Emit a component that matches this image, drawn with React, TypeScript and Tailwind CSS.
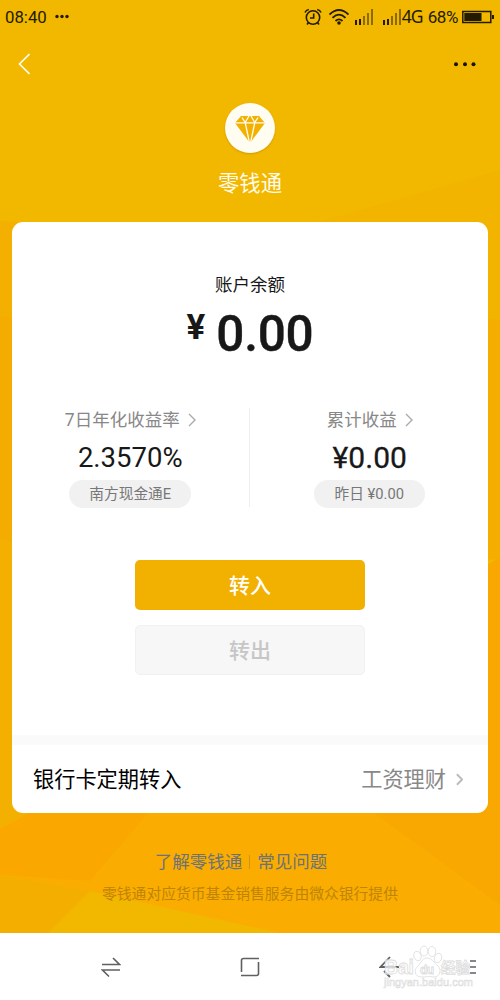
import { ReactNode } from 'react';
import clsx from 'clsx';

const Backdrop = () => (
	<svg className="absolute inset-0 h-full w-full" viewBox="0 0 500 934" preserveAspectRatio="none">
		<path d="M0 0H500V934H0Z" fill="#f2b800" />
		<path d="M500 170L340 216L250 240V560H500Z" fill="#f3b400" />
		<path d="M0 221L250 240V600L0 540Z" fill="#f4b000" />
		<path d="M500 320L250 300V560H500Z" fill="#f5ae00" />
		<path d="M0 316L200 350V590L0 540Z" fill="#f5ac00" />
		<path d="M0 540L160 580V735L0 830Z" fill="#f4b000" />
		<path d="M500 558L250 700V934H500Z" fill="#f8a800" />
		<path d="M0 830L160 740H360L500 850V934H190L0 876Z" fill="#faad00" />
		<path d="M0 830L150 745V812L90 882L0 876Z" fill="#faa700" />
		<path d="M373 813L500 906V700H250Z" fill="#f8a800" />
		<path d="M0 876L90 892L280 934H0Z" fill="#f2b800" />
		<path d="M0 876L90 892L48 934H0Z" fill="#f4ae00" />
	</svg>
);

const Signal = () => (
	<svg className="h-[18px] w-[19px]" viewBox="0 0 19 18" fill="#231b00">
		<path d="M0 12h2v5H0zM4 11h2v6H4z" />
		<path d="M8 8h2v9H8zM12 5h2v12h-2zM16 1h2v16h-2z" opacity=".5" />
	</svg>
);

const StatusBar = () => (
	<div className="flex h-[34px] items-center pl-[5px] text-[#231b00]">
		<span className="w-[43px] pt-px text-[16.8px]">08:40</span>
		<svg className="ml-[6px] h-2 w-4" viewBox="0 0 16 8" fill="currentColor">
			<circle cx="3" cy="3.5" r="1.7" />
			<circle cx="8" cy="3.5" r="1.7" />
			<circle cx="13" cy="3.5" r="1.7" />
		</svg>
		<div className="ml-auto flex items-center pr-1.5">
			<svg
				className="h-[18px] w-[18px]"
				viewBox="0 0 18 18"
				fill="none"
				stroke="currentColor"
				strokeWidth="1.6"
			>
				<circle cx="9" cy="9.5" r="6.7" />
				<path d="M9.7 5.5V10H6M1 4.5Q2 2 4.8 1.5M17 4.5Q16 2 13.2 1.5M4.5 14.5l-1.5 2M13.5 14.5l1.5 2" />
			</svg>
			<svg
				className="ml-[7px] h-[18px] w-5"
				viewBox="0 0 20 18"
				fill="none"
				stroke="currentColor"
				strokeWidth="1.8"
			>
				<path d="M.5 6.5Q10-2.5 19.5 6.5M3.5 9.8Q10 3.5 16.5 9.8M6.5 13Q10 9.7 13.5 13" />
				<circle cx="10" cy="15" r="1.8" fill="currentColor" stroke="none" />
			</svg>
			<div className="ml-1.5 flex gap-[9px]">
				<Signal />
				<Signal />
			</div>
			<span className="w-[21px] pb-px font-['Noto_Sans',sans-serif] text-[17.5px] tracking-[-0.8px]">4G</span>
			<span className="ml-[5px] pt-0.5 text-[17px] tracking-[-0.4px]">68%</span>
			<svg className="ml-1 h-[14px] w-8 shrink-0" viewBox="0 0 32 14" fill="none">
				<path d="M.8 1.5h28v11H.8z" stroke="currentColor" strokeWidth="1.5" />
				<path d="M2.3 3h17.2v8H2.3zM30 5h2v4h-2z" fill="currentColor" />
			</svg>
		</div>
	</div>
);

const Chevron = ({ className }: { className?: string }) => (
	<svg className={className} viewBox="0 0 8 14" fill="none" stroke="currentColor">
		<path d="M1 1l6 6-6 6" />
	</svg>
);

interface StatProps {
	label: string;
	value: string;
	valueClass: string;
	note: ReactNode;
	noteClass: string;
}

const Stat = ({ label, value, valueClass, note, noteClass }: StatProps) => (
	<div className="flex h-[99px] flex-1 flex-col items-center">
		<div className="flex h-6 items-center gap-2 text-[17.5px] text-[#888]">
			{label}
			<Chevron className="h-[14px] w-2 stroke-[1.4] text-[#aaa]" />
		</div>
		<div className={clsx('mt-[7px] flex h-[38px] items-center text-[#181818]', valueClass)}>{value}</div>
		<div
			className={clsx(
				'mt-[3px] flex h-7 shrink-0 items-center justify-center rounded-full bg-[#f1f1f1] text-[#777]',
				noteClass
			)}
		>
			{note}
		</div>
	</div>
);

const AccountCard = () => (
	<section className="mx-3 mt-[22px] flex h-[591px] flex-col rounded-[11px] bg-white">
		<div className="mt-[50px] h-[26px] text-center text-[17.5px] leading-[26px] text-[#181818]">账户余额</div>
		<div className="mt-2 flex h-14 justify-center text-[#181818]">
			<span className="mt-[-3px] text-[35px] leading-[50px] font-bold">¥</span>
			<span className="ml-[11px] text-[49.5px] leading-[56px] font-medium tracking-[-0.2px] [-webkit-text-stroke:0.4px_#181818]">
				0.00
			</span>
		</div>
		<div className="mt-[46px] flex">
			<Stat
				label="7日年化收益率"
				value="2.3570%"
				valueClass="text-[27.5px]"
				note="南方现金通E"
				noteClass="w-[122px] text-[14.7px]"
			/>
			<div className="mr-0.5 w-px bg-[#eee]" />
			<Stat
				label="累计收益"
				value="¥0.00"
				valueClass="pb-px text-[30px] [-webkit-text-stroke:0.3px_#181818]"
				note="昨日 ¥0.00"
				noteClass="mr-px w-[111px] text-[14.7px]"
			/>
		</div>
		<div className="mt-[53px] flex flex-col items-center gap-[15px] text-[21px] font-medium">
			<button className="h-[50px] w-[230px] rounded-[5px] bg-[#f2b000] pt-[3px] text-white">转入</button>
			<button className="h-[50px] w-[230px] rounded-[5px] border border-[#f1f1f1] bg-[#f7f7f7] pt-[3px] text-[#c6c6c6]">
				转出
			</button>
		</div>
		<div className="mt-auto h-2.5 bg-[#fafafa]" />
		<div className="flex h-[68px] items-center pt-0.5 pr-6 pl-[21px] text-[21.2px]">
			<span className="text-black">银行卡定期转入</span>
			<span className="ml-auto text-[#888]">工资理财</span>
			<Chevron className="mr-px mb-0.5 ml-[10px] h-[13px] w-[7px] stroke-[2.2] text-[#bbb]" />
		</div>
	</section>
);

const Watermark = () => (
	<svg
		className="absolute top-2 right-[22px] h-12 w-[98px]"
		viewBox="0 0 98 48"
		fill="#fff"
		fillOpacity=".7"
		stroke="#dcdcdc"
		strokeWidth=".8"
	>
		<ellipse cx="37.5" cy="15" rx="3.6" ry="4.8" transform="rotate(-20 37.5 15)" />
		<ellipse cx="44" cy="10" rx="3.8" ry="5" />
		<ellipse cx="52" cy="10.5" rx="3.8" ry="5" />
		<ellipse cx="58" cy="17" rx="3.6" ry="4.8" transform="rotate(20 58 17)" />
		<path d="M47 17c-5 0-6 5-9 8-5 4-3 11 3 11 4 0 9-1 13 0 6 0 8-7 4-11-4-3-6-8-11-8z" />
		<g fontFamily="Liberation Sans, sans-serif" fontWeight="bold">
			<text x="4" y="33" fontSize="19.5" textLength="30">
				Bai
			</text>
			<text x="40" y="33" fontSize="12" textLength="14">
				du
			</text>
			<text x="61" y="32" fontSize="14.5" fontFamily="Noto Sans CJK SC, sans-serif">
				经验
			</text>
			<text x="4" y="45" fontSize="11" fontWeight="normal" strokeWidth=".6" textLength="89">
				jingyan.baidu.com
			</text>
		</g>
	</svg>
);

const SystemNav = () => (
	<nav className="relative h-[67px] bg-white text-[#606060]">
		<div className="flex h-full items-center pr-[23px] pl-[101px]">
			<svg className="h-[22px] w-5" viewBox="0 0 20 22" fill="none" stroke="currentColor" strokeWidth="1.6">
				<path d="M1 8.5h17.5L12 2M19 14H1.5L8 20.5" />
			</svg>
			<svg
				className="ml-[119px] h-5 w-5"
				viewBox="0 0 20 20"
				fill="none"
				stroke="currentColor"
				strokeWidth="1.6"
			>
				<path d="M1.5 15V3.5Q1.5 1.5 3.5 1.5H19M18.5 5v11.5q0 2-2 2H1" />
			</svg>
			<svg
				className="ml-[119px] h-[22px] w-5"
				viewBox="0 0 20 22"
				fill="none"
				stroke="currentColor"
				strokeWidth="1.8"
			>
				<path d="M11 1L1.5 11H20M5 15l6 6" />
			</svg>
			<svg className="ml-auto h-[14px] w-2" viewBox="0 0 8 14" stroke="currentColor" strokeWidth="1.6">
				<path d="M1 1h6M1 7h6M1 13h6" />
			</svg>
		</div>
		<Watermark />
	</nav>
);

const App = () => {
	return (
		<div className="flex h-[1000px] w-[500px] flex-col overflow-hidden font-[Roboto,'Noto_Sans_CJK_SC',sans-serif]">
			<main className="relative h-[933px]">
				<Backdrop />
				<div className="relative">
					<StatusBar />
					<header className="flex h-[60px] items-center justify-between pr-[23px] pl-[18px]">
						<svg
							className="h-[22px] w-3"
							viewBox="0 0 12 22"
							fill="none"
							stroke="#fffbed"
							strokeWidth="1.7"
						>
							<path d="M11.5 1L1.5 11l10 10" />
						</svg>
						<svg className="h-1.5 w-6" viewBox="0 0 24 6" fill="#15130a">
							<circle cx="3" cy="3.3" r="2" />
							<circle cx="12" cy="3.3" r="2" />
							<circle cx="20.5" cy="3.3" r="2" />
						</svg>
					</header>

					<div className="flex flex-col items-center pt-[9px]">
						<div className="flex h-[50px] w-[50px] items-center justify-center rounded-full bg-[#fffcf2] shadow-[0_1px_2px_rgba(150,100,0,0.35)]">
							<svg className="mt-0.5 h-[28px] w-[32px]" viewBox="0 0 32 28">
								<path d="M7 1h18l6 7-15 20L1 8z" fill="#f2b100" />
								<path
									d="M1 7.8h30M8 2.5l3.2 5L15.5 28M24 2.5l-3.2 5L16.5 28M11.2 7.5L15 1M20.8 7.5L17 1"
									fill="none"
									stroke="#fffcf2"
									strokeWidth="1.3"
								/>
							</svg>
						</div>
						<h1 className="mt-[15px] text-[21.3px] leading-[32px] text-[#fffbed]">零钱通</h1>
					</div>

					<AccountCard />

					<footer className="flex flex-col items-center">
						<div className="mt-[36px] mr-[18px] flex h-[26px] items-center text-[17.5px] text-[#6d7276]">
							<span>了解零钱通</span>
							<span className="mx-[7px] h-[14px] w-px bg-[#cf951a]" />
							<span>常见问题</span>
						</div>
						<p className="mt-2 text-[14.8px] leading-[22px] text-[#bd8407]">
							零钱通对应货币基金销售服务由微众银行提供
						</p>
					</footer>
				</div>
			</main>
			<SystemNav />
		</div>
	);
};

export default App;
